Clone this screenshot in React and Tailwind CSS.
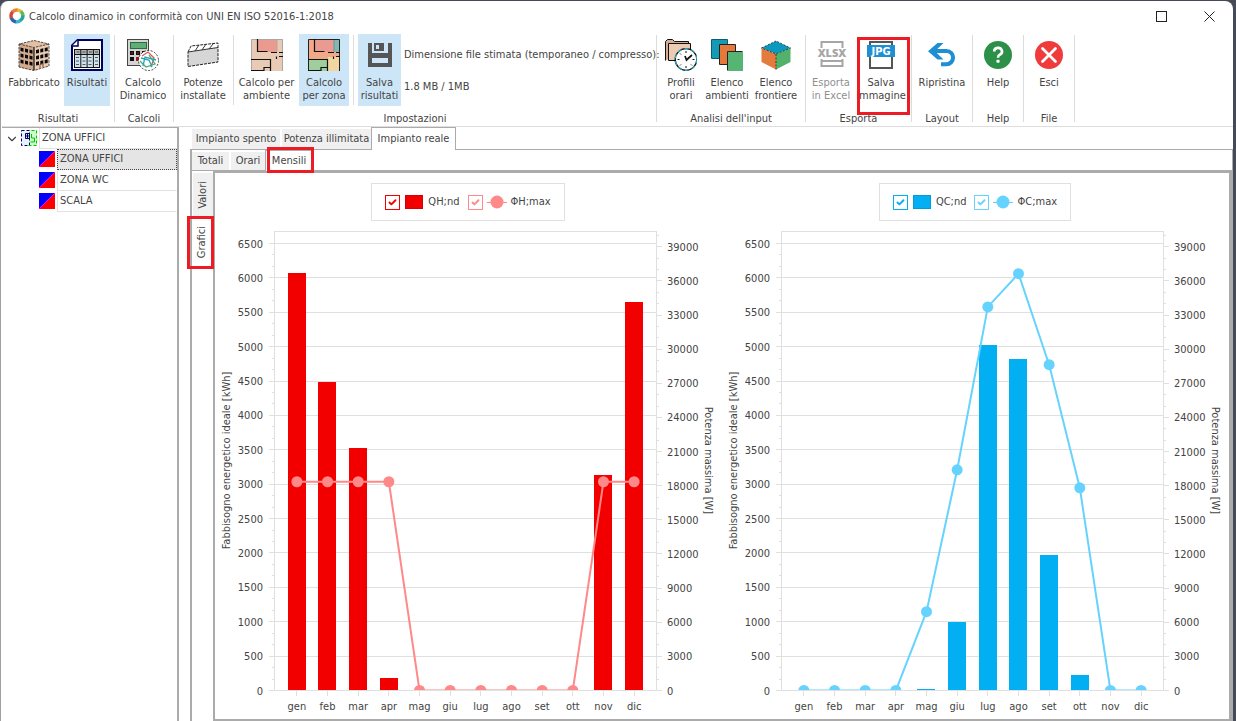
import { useEffect, useRef, useState } from "react";
import { Check, ChevronDown } from "lucide-react";
import clsx from "clsx";

const MONTHS = ["gen", "feb", "mar", "apr", "mag", "giu", "lug", "ago", "set", "ott", "nov", "dic"];

const HEATING = {
  name: "Riscaldamento",
  barColor: "#f20000",
  lineColor: "#ff8888",
  energyLabel: "QH;nd",
  powerLabel: "ΦH;max",
  energy: [6069, 4488, 3524, 180, 0, 0, 0, 0, 0, 0, 3131, 5647],
  power: [18350, 18350, 18350, 18350, 0, 0, 0, 0, 0, 0, 18350, 18350],
  energyStyle: { check: "border-[#f20000]", mark: "text-[#f20000]", swatch: "bg-[#f20000] border-[#d80000]" },
  powerStyle: { check: "border-[#ff8888]", mark: "text-[#ff8888]" },
};

const COOLING = {
  name: "Raffrescamento",
  barColor: "#03aff3",
  lineColor: "#66d3ff",
  energyLabel: "QC;nd",
  powerLabel: "ΦC;max",
  energy: [0, 0, 0, 0, 16, 993, 5022, 4819, 1969, 222, 0, 0],
  power: [0, 0, 0, 0, 6926, 19400, 33720, 36640, 28640, 17820, 0, 0],
  energyStyle: { check: "border-[#03aff3]", mark: "text-[#03aff3]", swatch: "bg-[#03aff3] border-[#029ad8]" },
  powerStyle: { check: "border-[#66d3ff]", mark: "text-[#66d3ff]" },
};

/* ---------- icons ---------- */

function Icon({ children, className = "size-8" }) {
  return (
    <svg viewBox="0 0 32 32" className={className} aria-hidden="true">
      {children}
    </svg>
  );
}

function LogoIcon() {
  return (
    <svg viewBox="0 0 16 16" className="size-4" fill="none" strokeWidth="3.4" aria-hidden="true">
      <path d="M8 2a6 6 0 0 1 4.6 2.1" stroke="#e9b93a" />
      <path d="M12 3.5A6 6 0 0 1 14 8" stroke="#5cb85c" />
      <path d="M14 7.5a6 6 0 0 1-3.4 5.3" stroke="#22a79a" />
      <path d="M11.2 12.6A6 6 0 0 1 6 13.7" stroke="#36b4dc" />
      <path d="M6.8 13.9A6 6 0 0 1 2.3 9.6" stroke="#2f66a8" />
      <path d="M2.4 10A6 6 0 0 1 4 3.5" stroke="#d8453c" />
      <path d="M3.6 3.9A6 6 0 0 1 8.4 2" stroke="#ee7f33" />
    </svg>
  );
}

function BuildingIcon() {
  const rows = [0, 1, 2];
  return (
    <Icon>
      <path d="M1 5 16 1.500 31 5V26L16 31.500 1 28Z" fill="#e3bfa4" />
      <path d="M1 5 16 8.500V31.500L1 28Z" fill="#d3a98c" />
      <path d="M16 8.500 31 5V27L16 31.500Z" fill="#ecccb4" />
      <path d="M1 28V5L16 1.500 31 5V27L16 31.500ZM1 5l15 3.500L31 5" fill="none" stroke="#222" strokeWidth=".8" strokeDasharray="2.500 1" />
      <path d="M16 9v22" stroke="#111" strokeWidth="1.200" />
      {rows.map((r) => (
        <g key={r} fill="#0a0a0a">
          <path d={`M2.500 ${8.5 + r * 6}l3 .7v3.600l-3-.7z`} />
          <path d={`M7 ${9.5 + r * 6}l3 .7v3.600l-3-.7z`} />
          <path d={`M11.500 ${10.5 + r * 6}l3 .7v3.600l-3-.7z`} />
          <path d={`M18 ${11 + r * 6}l3-.7v3.600l-3 .7z`} />
          <path d={`M22.300 ${10 + r * 6}l3-.7v3.600l-3 .7z`} />
          <path d={`M26.700 ${9 + r * 6}l3-.7v3.600l-3 .7z`} />
        </g>
      ))}
      <path d="M22 29.500v-4l3-.8v4" fill="#ecccb4" stroke="#7a4e30" />
    </Icon>
  );
}

function TableIcon() {
  return (
    <Icon>
      <path d="M6.500 1H31V31H1V6.500Z" fill="#fff" stroke="#00005f" strokeWidth="2" />
      <path d="M7 1v6H1" fill="#fff" stroke="#00005f" strokeWidth="1.500" />
      <rect x="3.500" y="10.500" width="25" height="18" fill="#cfe3ee" stroke="#111" />
      <rect x="4" y="11" width="24" height="4" fill="#b4b4b4" />
      <path d="M3.500 15.500h25M9.800 10.500v18M16.100 10.500v18M22.400 10.500v18" stroke="#111" />
      <path d="M5.500 13h3M11.500 13h3M18 13h3M24 13h3M5 18.500h3M11.500 18.500h3M17.500 18.500h3M24 18.500h3M5 22h3M11.500 22h3M17.500 22h3M24 22h3M5 25.500h3M11.500 25.500h3M17.500 25.500h3M24 25.500h3" stroke="#333" strokeWidth=".8" />
    </Icon>
  );
}

function CalculatorIcon() {
  return (
    <Icon>
      <rect x=".5" y=".5" width="21" height="26" fill="#d4d4d4" stroke="#444" />
      <rect x="3.500" y="3.500" width="16" height="6" fill="#5fae76" stroke="#2c6b3d" />
      <path d="M3 12h4v4H3zM9 12h4v4H9zM15 12h4v4h-4zM3 18h4v4H3z" fill="#111" />
      <path d="M9 18h4v4H9z" fill="#a01818" />
      <path d="M4 14h2M10 14h2M16 14h2" stroke="#b02020" />
      <circle cx="21.500" cy="21.500" r="10" fill="#fff" stroke="#222" strokeWidth=".9" strokeDasharray="2 1.500" />
      <path d="M15 17l6-4 6 6-3 9" fill="none" stroke="#e0555a" strokeWidth="1.300" />
      <path d="M13 22l6 6 9-3-6-9" fill="none" stroke="#3fae6e" strokeWidth="1.300" />
      <path d="M16 27l2-9 11 3M14 19l8 2 3 7" fill="none" stroke="#28a5b5" strokeWidth="1.300" />
    </Icon>
  );
}

function BoxIcon() {
  return (
    <Icon>
      <path d="M1 13 31 8.500V23L1 27.500Z" fill="#d6d6d6" />
      <path d="M1 13 4 7 31 4V8.500Z" fill="#fff" />
      <path d="M1 13 4 7 31 4V23L1 27.500Z" fill="none" stroke="#222" strokeDasharray="3 1" />
      <path d="M1 13 31 8.500M8 12l4-6M15 11l4-6M22 10l4-5" fill="none" stroke="#333" />
    </Icon>
  );
}

function PlanIcon({ zoned }) {
  return (
    <Icon>
      <path d="M0 0h32v32H0z" fill={zoned ? "#f2a987" : "#e9cbb5"} />
      <path d="M7 1h19v12H7z" fill="#eb9a90" />
      {zoned && (
        <>
          <path d="M26 0h6v13h-6z" fill="#83b7b4" />
          <path d="M0 21h20v11H0z" fill="#9fcd9b" />
          <path d="M20 18h12v14H20z" fill="#f1d6a2" />
        </>
      )}
      <path d="M.5 32V.500H31.500V32" fill="none" stroke={zoned ? "#222" : "#a8a8a8"} />
      <path d="M6.500 0v12.500h10M20 13.500h6M28 13.500h4M0 20.500h19M19.500 20v12M25.500 20v-2.500M28 17.500h4M0 31.500h13v-3h6.500" fill="none" stroke="#111" strokeWidth="1.200" />
      <path d="M26 1v12" stroke={zoned ? "#5c9c98" : "#aaa"} />
    </Icon>
  );
}

function SaveIcon() {
  return (
    <Icon>
      <path d="M4 4h24v24H4z" fill="#555" />
      <path d="M8 4h16v10H8zM8 19h16v5H8z" fill="#cde6f7" />
      <path d="M10 4h10v8H10z" fill="#555" />
      <path d="M12 6h3v4h-3z" fill="#cde6f7" />
    </Icon>
  );
}

function FolderClockIcon() {
  return (
    <Icon>
      <path d="M.5 21.500V2.500L2.500.5h5l2 2h14v8" fill="#d7ac90" stroke="#111" />
      <path d="M3.500 21.500V4.500h22V21.500Z" fill="#eccbb4" stroke="#111" />
      <circle cx="21" cy="20.500" r="10.800" fill="#fff" stroke="#111" strokeWidth="1.300" />
      <circle cx="21" cy="20.500" r="10.800" fill="none" stroke="#2aa7c4" strokeWidth="1.300" strokeDasharray="4 3" />
      <path d="M21 12v2M21 27v2M12.500 20.500h2M27.500 20.500h2M15 14.500l1 1M27 26.500l-1-1M15 26.500l1-1" stroke="#111" />
      <path d="M20 17l1.500 4L27 16" fill="none" stroke="#111" strokeWidth="1.700" />
    </Icon>
  );
}

function RoomsIcon() {
  return (
    <Icon>
      <path d="M.5.5h16v19h-16z" fill="#159ab5" stroke="#0b5d70" />
      <path d="M8.500 5.500h16v20h-16z" fill="#e5793b" stroke="#222" />
      <path d="M17 12h15v20H16V13z" fill="#57b574" />
      <path d="M16.500 31V12.500H31" fill="none" stroke="#222" />
    </Icon>
  );
}

function CubeIcon() {
  return (
    <Icon>
      <path d="M1.500 9 16 2l14.500 7L16 15Z" fill="#0c99c0" />
      <path d="M1.500 9 16 15v15.500L1.500 23Z" fill="#e47a3c" />
      <path d="M30.500 9 16 15v15.500L30.500 23Z" fill="#52b26c" />
      <path d="M1.500 9 16 2l14.500 7L16 15ZM16 15v15.500" fill="none" stroke="#222" strokeWidth=".8" strokeDasharray="2 1.500" />
    </Icon>
  );
}

function XlsxIcon() {
  return (
    <Icon>
      <path d="M6.500 9V3h21v6M6.500 20v7h21v-7M6.500 22h21" fill="none" stroke="#a6a6a6" strokeWidth="2" />
      <text x="17" y="18" textAnchor="middle" className="font-['Open_Sans',sans-serif] text-[11px] font-extrabold" fill="#a6a6a6">
        XLSX
      </text>
    </Icon>
  );
}

function JpgIcon() {
  return (
    <Icon>
      <rect x="5" y="3" width="22" height="26" fill="#fff" stroke="#555" strokeWidth="2" />
      <rect x="2" y="6" width="28" height="12" fill="#1f8fd3" />
      <text x="16" y="16" textAnchor="middle" className="font-['DejaVu_Sans_Condensed',sans-serif] text-[11px] font-bold" fill="#fff">
        JPG
      </text>
    </Icon>
  );
}

function UndoIcon() {
  return (
    <Icon>
      <path d="M5 12h15.500a6 6 0 0 1 0 13.200H15" fill="none" stroke="#1f8fd3" strokeWidth="4" />
      <path d="M11.500 4h6l-8.500 8.200 8.500 8.300h-6L2 12.200Z" fill="#1f8fd3" />
    </Icon>
  );
}

function HelpIcon() {
  return (
    <Icon>
      <circle cx="16" cy="16" r="14" fill="#2d9048" />
      <path d="M12.200 12.500a3.900 3.600 0 1 1 5.600 3.200c-1.400.8-1.800 1.400-1.800 3" fill="none" stroke="#fff" strokeWidth="2.600" />
      <rect x="14.400" y="20.700" width="3.200" height="3" rx="1" fill="#fff" />
    </Icon>
  );
}

function ExitIcon() {
  return (
    <Icon>
      <circle cx="16" cy="16" r="14" fill="#ef3b3a" />
      <path d="M9.500 9.500l13 13M22.500 9.500l-13 13" stroke="#fff" strokeWidth="2.800" strokeLinecap="round" />
    </Icon>
  );
}

function ZonesRootIcon() {
  return (
    <svg viewBox="0 0 16 16" className="mt-0.5 size-4 shrink-0 self-start" aria-hidden="true">
      <path d="M7 0h9v16H7z" fill="#ccffcc" />
      <path d="M.5.5h8v15h-8z" fill="#e6f2ff" stroke="#00005f" strokeDasharray="3 2" />
      <path d="M4.500 3.500h4v5h-4zM6.500 3v6M4 6h5" fill="none" stroke="#00005f" />
      <path d="M10.500.5h5v15h-9" fill="none" stroke="#00c800" strokeDasharray="3 2" />
      <path d="M10.500 4v4h3v4h-4" fill="none" stroke="#00c800" />
    </svg>
  );
}

function ZoneIcon() {
  return (
    <svg viewBox="0 0 16 16" className="mt-0.5 size-4 shrink-0 self-start" aria-hidden="true">
      <path d="M0 0h16L0 16Z" fill="#0000ff" />
      <path d="M16 0v16H0Z" fill="#ff0000" />
      <path d="M0 16 16 0" stroke="#ff00ff" />
    </svg>
  );
}

/* ---------- ribbon ---------- */

function RibbonButton({ icon, lines, width, active, disabled, marked }) {
  return (
    <button
      type="button"
      disabled={disabled}
      className={clsx(
        "relative flex h-[72px] shrink-0 flex-col items-center pt-[5px] leading-[13px] whitespace-nowrap",
        width,
        active && "bg-[#cde6f7]",
        disabled && "text-[#8f8f8f]",
      )}
    >
      {icon}
      <span className="mt-[5px] block">
        {lines.map((line) => (
          <span key={line} className="block">
            {line}
          </span>
        ))}
      </span>
      {marked && <span className="absolute top-[3px] -right-[7px] -left-0.5 h-[78px] border-3 border-[#ed1c24]" />}
    </button>
  );
}

function RibbonGroup({ title, className, children }) {
  return (
    <section aria-label={title} className="flex h-[87px] shrink-0 flex-col border-r border-[#dcdcdc]">
      <div className={clsx("-mt-px flex", className)}>{children}</div>
      <h2 className="mt-[6px] text-center leading-[14px]">{title}</h2>
    </section>
  );
}

function RibbonDivider() {
  return <span className="mt-px h-[70px] w-px bg-[#dcdcdc]" />;
}

function Ribbon() {
  return (
    <div className="flex h-[97px] border-b border-[#dedede] pt-[5px]">
      <RibbonGroup title="Risultati" className="gap-px pr-1 pl-[3px]">
        <RibbonButton width="w-[58px]" icon={<BuildingIcon />} lines={["Fabbricato"]} />
        <RibbonButton width="w-[46px]" icon={<TableIcon />} lines={["Risultati"]} active />
      </RibbonGroup>
      <RibbonGroup title="Calcoli" className="pr-[5px] pl-[3px]">
        <RibbonButton width="w-[50px]" icon={<CalculatorIcon />} lines={["Calcolo", "Dinamico"]} />
      </RibbonGroup>
      <RibbonGroup title="Impostazioni" className="pr-2 pl-1">
        <RibbonButton width="w-[50px]" icon={<BoxIcon />} lines={["Potenze", "installate"]} />
        <div className="flex gap-1 pl-[5px]">
          <RibbonDivider />
          <RibbonButton width="w-[57px]" icon={<PlanIcon />} lines={["Calcolo per", "ambiente"]} />
          <RibbonButton width="w-[50px]" icon={<PlanIcon zoned />} lines={["Calcolo", "per zona"]} active />
          <RibbonDivider />
          <RibbonButton width="w-[43px]" icon={<SaveIcon />} lines={["Salva", "risultati"]} active />
        </div>
        <div className="flex w-[247px] flex-col gap-[18px] pt-3.5 pl-[3px] leading-[14px] whitespace-nowrap">
          <p>Dimensione file stimata (temporaneo / compresso):</p>
          <p>1.8 MB / 1MB</p>
        </div>
      </RibbonGroup>
      <RibbonGroup title="Analisi dell'input" className="pr-[3px] pl-px">
        <RibbonButton width="w-[46px]" icon={<FolderClockIcon />} lines={["Profili", "orari"]} />
        <RibbonButton width="w-[46px]" icon={<RoomsIcon />} lines={["Elenco", "ambienti"]} />
        <RibbonButton width="w-[52px]" icon={<CubeIcon />} lines={["Elenco", "frontiere"]} />
      </RibbonGroup>
      <RibbonGroup title="Esporta" className="gap-1.5 pr-2 pl-[3px]">
        <RibbonButton width="w-[44px]" icon={<XlsxIcon />} lines={["Esporta", "in Excel"]} disabled />
        <RibbonButton width="w-[44px]" icon={<JpgIcon />} lines={["Salva", "immagine"]} marked />
      </RibbonGroup>
      <RibbonGroup title="Layout" className="px-[5px]">
        <RibbonButton width="w-[50px]" icon={<UndoIcon />} lines={["Ripristina"]} />
      </RibbonGroup>
      <RibbonGroup title="Help" className="px-[5px]">
        <RibbonButton width="w-[40px]" icon={<HelpIcon />} lines={["Help"]} />
      </RibbonGroup>
      <RibbonGroup title="File" className="px-[5px]">
        <RibbonButton width="w-[40px]" icon={<ExitIcon />} lines={["Esci"]} />
      </RibbonGroup>
    </div>
  );
}

/* ---------- zone tree ---------- */

function ZoneTree() {
  const zones = ["ZONA UFFICI", "ZONA WC", "SCALA"];
  return (
    <nav aria-label="Zone" className="w-[177px] shrink-0 border-t border-r-2 border-[#ababab]">
      <div className="flex h-[21px] items-center">
        <button type="button" aria-label="Comprimi" className="flex w-[19px] justify-center">
          <ChevronDown className="size-3.5" />
        </button>
        <ZonesRootIcon />
        <span className="ml-0.5 flex h-full flex-1 items-center border-b border-l border-[#e2e2e2] pl-0.5">ZONA UFFICI</span>
      </div>
      <ul className="pl-[37px]">
        {zones.map((zone, i) => (
          <li key={zone} className="flex h-[21px] items-center">
            <ZoneIcon />
            <button
              type="button"
              className={clsx(
                "ml-0.5 h-full flex-1 border pl-0.5 text-left",
                i === 0
                  ? "border-dotted border-[#444] bg-[#e5e5e5]"
                  : "border-t-transparent border-r-transparent border-b-[#e2e2e2] border-l-[#e2e2e2]",
              )}
            >
              {zone}
            </button>
          </li>
        ))}
      </ul>
    </nav>
  );
}

/* ---------- charts ---------- */

function useSize(initial) {
  const ref = useRef(null);
  const [size, setSize] = useState(initial);
  useEffect(() => {
    const observer = new ResizeObserver(([entry]) => {
      const { width, height } = entry.contentRect;
      setSize({ width: Math.round(width), height: Math.round(height) });
    });
    observer.observe(ref.current);
    return () => observer.disconnect();
  }, []);
  return [ref, size];
}

const MARGIN = { left: 58, right: 66, top: 4, bottom: 29 };
const ENERGY_MAX = 6675;
const POWER_MAX = 40346;

function MonthlyPlot({ series, id }) {
  const [ref, { width, height }] = useSize({ width: 506, height: 492 });
  const left = MARGIN.left;
  const right = Math.max(width - MARGIN.right, left + 100);
  const top = MARGIN.top;
  const bottom = Math.max(height - MARGIN.bottom, top + 100);
  const step = (right - left) / 12.46;
  const monthX = (i) => left + 0.5 + step * (0.73 + i);
  const energyY = (v) => bottom + 0.5 - (v / ENERGY_MAX) * (bottom - top);
  const powerY = (v) => bottom + 0.5 - (v / POWER_MAX) * (bottom - top);
  const snap = (y) => Math.floor(y) + 0.5;
  const energyTicks = Array.from({ length: 14 }, (_, i) => i * 500);
  const powerTicks = Array.from({ length: 14 }, (_, i) => i * 3000);
  const middle = (top + bottom) / 2;

  return (
    <div ref={ref} className="min-h-0 flex-1 overflow-hidden">
      <svg width={width} height={height} className="block" fill="#444" role="img" aria-label={series.name}>
        <clipPath id={id}>
          <rect x={left} y={top} width={right - left} height={bottom - top} />
        </clipPath>
        <g stroke="#e0e0e0" shapeRendering="crispEdges" fill="none">
          <rect x={left + 0.5} y={top + 0.5} width={right - left} height={bottom - top} />
          {energyTicks.map((v) => (
            <path key={v} d={`M${left - 5} ${snap(energyY(v))}H${right}`} />
          ))}
          {Array.from({ length: 40 }, (_, i) => (
            <path key={i} d={`M${left - 2} ${snap(energyY((i * 500) / 3))}h2`} />
          ))}
          {powerTicks.map((v) => (
            <path key={v} d={`M${right} ${snap(powerY(v))}h6`} />
          ))}
          {Array.from({ length: 41 }, (_, i) => (
            <path key={i} d={`M${right} ${snap(powerY(i * 1000))}h3`} />
          ))}
          {MONTHS.map((m, i) => (
            <path key={m} d={`M${snap(monthX(i))} ${bottom}v6`} />
          ))}
        </g>
        <g clipPath={`url(#${id})`}>
          {series.energy.map((v, i) => (
            <rect
              key={MONTHS[i]}
              x={Math.round(monthX(i) - step * 0.3)}
              y={Math.round(energyY(v))}
              width={Math.round(step * 0.6)}
              height={Math.max(bottom - Math.round(energyY(v)), 0)}
              fill={series.barColor}
            />
          ))}
          <polyline
            points={series.power.map((v, i) => `${monthX(i)},${powerY(v)}`).join(" ")}
            fill="none"
            stroke={series.lineColor}
            strokeWidth="2"
          />
          {series.power.map((v, i) => (
            <circle key={MONTHS[i]} cx={monthX(i)} cy={powerY(v)} r="5.5" fill={series.lineColor} />
          ))}
        </g>
        {energyTicks.map((v) => (
          <text key={v} x={left - 11} y={Math.round(energyY(v)) + 4} textAnchor="end">
            {v}
          </text>
        ))}
        {powerTicks.map((v) => (
          <text key={v} x={right + 11} y={Math.round(powerY(v)) + 4}>
            {v}
          </text>
        ))}
        {MONTHS.map((m, i) => (
          <text key={m} x={monthX(i)} y={bottom + 20} textAnchor="middle">
            {m}
          </text>
        ))}
        <text transform={`translate(14 ${middle}) rotate(-90)`} textAnchor="middle">
          Fabbisogno energetico ideale [kWh]
        </text>
        <text transform={`translate(${width - 17} ${middle}) rotate(90)`} textAnchor="middle">
          Potenza massima [W]
        </text>
      </svg>
    </div>
  );
}

function LegendCheckbox({ style }) {
  return (
    <span className="relative flex size-[15px] items-center justify-center">
      <input type="checkbox" defaultChecked className={clsx("peer size-[15px] appearance-none border bg-white", style.check)} />
      <Check
        strokeWidth={5}
        className={clsx("pointer-events-none absolute size-[9px] opacity-0 peer-checked:opacity-100", style.mark)}
      />
    </span>
  );
}

function MonthlyChart({ series, id }) {
  return (
    <figure className="flex min-w-0 flex-col">
      <div className="flex justify-center pt-2.5 pr-0.5 pb-[6px]">
        <div className="flex h-[38px] items-center gap-2 border border-[#e0e0e0] px-[13px]">
          <label className="flex items-center gap-[5px]">
            <LegendCheckbox style={series.energyStyle} />
            <span className={clsx("h-3.5 w-[18px] border", series.energyStyle.swatch)} />
            {series.energyLabel}
          </label>
          <label className="flex items-center gap-1">
            <LegendCheckbox style={series.powerStyle} />
            <svg width="20" height="14" aria-hidden="true">
              <path d="M0 7.500h20" stroke={series.lineColor} />
              <circle cx="10" cy="7" r="6.500" fill={series.lineColor} />
            </svg>
            {series.powerLabel}
          </label>
        </div>
      </div>
      <MonthlyPlot series={series} id={id} />
    </figure>
  );
}

/* ---------- tabs ---------- */

function Tab({ children, active, className, marked }) {
  return (
    <button
      type="button"
      role="tab"
      aria-selected={!!active}
      className={clsx(
        "relative flex items-center justify-center whitespace-nowrap",
        active ? "-mb-px border border-b-0 border-[#ababab] bg-white" : "mt-0.5 bg-[#f0f0f0]",
        className,
      )}
    >
      {children}
      {marked && <span className="absolute -top-1 -right-0.5 -bottom-0.5 left-px border-3 border-[#ed1c24]" />}
    </button>
  );
}

function SideTab({ children, active, className, marked }) {
  return (
    <button
      type="button"
      role="tab"
      aria-selected={!!active}
      className={clsx("relative flex items-center justify-center", active ? "bg-white pr-0.5" : "bg-[#f0f0f0]", className)}
    >
      <span className="rotate-180 [writing-mode:vertical-rl]">{children}</span>
      {marked && <span className="absolute inset-y-0 -right-px -left-1.5 z-10 border-3 border-[#ed1c24]" />}
    </button>
  );
}

export default function App() {
  return (
    <div className="flex min-h-screen bg-[#464a58] pt-px pr-[3px] font-['DejaVu_Sans_Condensed','Noto_Sans',sans-serif] text-[11px] text-[#444]">
      <div className="flex min-w-0 flex-1 flex-col rounded-t-lg border-l border-[#a0a0a0] bg-white pl-px">
        <header className="flex h-[29px] items-center pt-px pl-[7px]">
          <LogoIcon />
          <h1 className="ml-1 flex-1 pt-0.5">Calcolo dinamico in conformità con UNI EN ISO 52016-1:2018</h1>
          <button type="button" aria-label="Ingrandisci" className="flex h-full w-12 items-center justify-center">
            <span className="size-[11px] border border-[#222]" />
          </button>
          <button type="button" aria-label="Chiudi" className="flex h-full w-12 items-center justify-center">
            <svg width="11" height="11" className="stroke-[#222]" aria-hidden="true">
              <path d="M.5.5l10 10M10.500.5l-10 10" />
            </svg>
          </button>
        </header>

        <Ribbon />

        <main className="flex min-h-0 flex-1">
          <ZoneTree />
          <section className="ml-[11px] flex min-w-0 flex-1 flex-col">
            <div role="tablist" className="flex h-[23px] gap-0.5 border-b border-[#ababab] pl-0.5">
              <Tab className="w-[88px]">Impianto spento</Tab>
              <Tab className="w-[89px]">Potenza illimitata</Tab>
              <Tab active className="-ml-0.5 w-[85px]">Impianto reale</Tab>
            </div>
            <div className="flex min-h-0 flex-1 flex-col border-r border-l-2 border-[#ababab]">
              <div role="tablist" className="flex h-[21px] gap-0.5 border-b border-[#ababab]">
                <Tab className="w-[37px]">Totali</Tab>
                <Tab className="w-[34px]">Orari</Tab>
                <Tab active marked className="-ml-0.5 w-[48px]">Mensili</Tab>
              </div>
              <div className="flex min-h-0 flex-1">
                <div role="tablist" className="flex w-[21px] shrink-0 flex-col pt-0.5 pl-px">
                  <SideTab className="h-[43px]">Valori</SideTab>
                  <SideTab active marked className="h-[53px]">Grafici</SideTab>
                </div>
                <div className="grid min-w-0 flex-1 grid-cols-2 gap-px border-t-2 border-r-3 border-b-2 border-l-2 border-[#ababab] pl-px">
                  <MonthlyChart series={HEATING} id="plot-heating" />
                  <MonthlyChart series={COOLING} id="plot-cooling" />
                </div>
              </div>
            </div>
          </section>
        </main>
      </div>
    </div>
  );
}
